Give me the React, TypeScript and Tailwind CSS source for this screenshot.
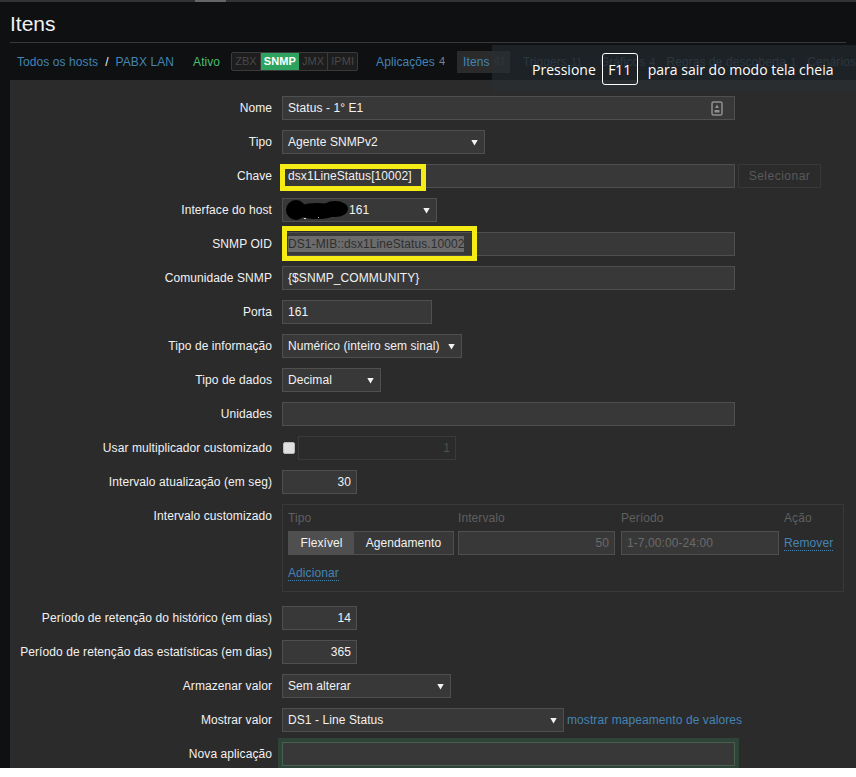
import React from "react";

const field = "h-6 border border-[#4f4f4f] bg-[#383838] text-[#f2f2f2] text-xs px-[5px] flex items-center";

function Row({ label, children }: { label: string; children: React.ReactNode }) {
  return (
    <div className="flex items-start gap-[10px]">
      <div className="w-[262px] shrink-0 h-6 flex items-center justify-end text-xs text-[#f2f2f2] whitespace-nowrap">{label}</div>
      <div className="flex items-start min-w-0">{children}</div>
    </div>
  );
}

function Select({ w, text, hidden }: { w: string; text: string; hidden?: boolean }) {
  return (
    <div className={`${field} ${w} justify-between`}>
      <span className={hidden ? "pl-[61px]" : ""}>{text}</span>
      <svg width="7" height="7" viewBox="0 0 7 7" className="mr-px"><path d="M0.3 1h6.4L3.5 6.5z" fill="#f2f2f2" /></svg>
    </div>
  );
}

function Link({ children, dotted, dim }: { children: React.ReactNode; dotted?: boolean; dim?: boolean }) {
  return <span className={`${dim ? "text-[#2f4556]" : "text-[#4484b4]"} text-xs ${dotted ? "border-b border-dotted border-[#4484b4]" : ""}`}>{children}</span>;
}

function Count({ n, dim }: { n: string; dim?: boolean }) {
  return <span className={`${dim ? "text-[#2f3f4a]" : "text-[#7d8488]"} text-[11px] ml-1`}>{n}</span>;
}

function Proto({ t, on, last }: { t: string; on?: boolean; last?: boolean }) {
  return (
    <span className={`h-[17px] px-[3px] flex items-center text-[11px] ${on ? "bg-[#2ea35f] text-white font-bold" : "text-[#4a4a4a]"} ${last || on ? "" : "border-r border-[#3a3a3a]"}`}>{t}</span>
  );
}

export default function App() {
  return (
    <div className="relative w-[856px] h-[768px] overflow-hidden bg-[#0e1012] font-['Liberation_Sans',Arial,sans-serif] tracking-[0.08px]">
      <div className="h-[2px] bg-[#333] flex"><div className="ml-[195px] w-[31px] bg-[#666]" /></div>
      <div className="h-[40px] px-[10px] pt-[2px] flex items-center">
        <h1 className="text-[21px] text-[#f2f2f2] leading-none tracking-normal">Itens</h1>
      </div>
      <div className="mx-[10px] h-px bg-[#383838]" />
      <nav className="h-[37px] flex items-center text-xs whitespace-nowrap">
        <div className="ml-[17px]"><Link>Todos os hosts</Link></div>
        <span className="ml-[7px] mr-[7px] text-[#f2f2f2]">/</span>
        <Link>PABX LAN</Link>
        <span className="ml-[19px] text-[#4dbd6e]">Ativo</span>
        <div className="ml-[11px] flex border border-[#3a3a3a] rounded-[2px] bg-[#1d1d1d]">
          <Proto t="ZBX" /><Proto t="SNMP" on /><Proto t="JMX" /><Proto t="IPMI" last />
        </div>
        <div className="ml-[18px]"><Link>Aplicações</Link></div><Count n="4" />
        <div className="ml-[12px] h-[22px] w-[55px] pl-[6px] bg-[#2b2b2b] flex items-center"><Link>Itens</Link><Count n="41" dim /></div>
        <div className="ml-[13px] w-[81px]"><Link dim>Triggers</Link><Count n="11" dim /></div>
        <div className="w-[70px]"><Link dim>Gráficos</Link><Count n="4" dim /></div>
        <div className="w-[148px]"><Link dim>Regras de descoberta</Link><Count n="1" dim /></div>
        <Link dim>Cenários</Link>
      </nav>

      <main className="ml-[10px] h-[688px] bg-[#2b2b2b] pt-4 flex flex-col gap-[10px]">
        <Row label="Nome">
          <div className={`${field} w-[453px] justify-between`}>
            <span>Status - 1° E1</span>
            <svg width="12" height="15" viewBox="0 0 12 15" className="mr-[6px]">
              <rect x="1" y="1" width="10" height="13" rx="1.5" fill="none" stroke="#8f8f8f" strokeWidth="1.5" />
              <path d="M6 3.5l2 3.5H4zM3.5 9h5v2.5h-5z" fill="#8f8f8f" />
            </svg>
          </div>
        </Row>
        <Row label="Tipo"><Select w="w-[203px]" text="Agente SNMPv2" /></Row>
        <Row label="Chave">
          <div className={`${field} w-[453px]`}>dsx1LineStatus[10002]</div>
          <div className="ml-[3px] h-6 w-[83px] border border-[#383838] text-xs text-[#5a5a5a] flex items-center justify-center tracking-[0.5px]">Selecionar</div>
        </Row>
        <Row label="Interface do host"><Select w="w-[155px]" text="161" hidden /></Row>
        <Row label="SNMP OID">
          <div className={`${field} w-[453px]`}>
            <span className="bg-[#6b6b6b] text-[#2e2e2e]">DS1-MIB::dsx1LineStatus.10002</span>
          </div>
        </Row>
        <Row label="Comunidade SNMP"><div className={`${field} w-[453px]`}>{"{$SNMP_COMMUNITY}"}</div></Row>
        <Row label="Porta"><div className={`${field} w-[150px]`}>161</div></Row>
        <Row label="Tipo de informação"><Select w="w-[180px]" text="Numérico (inteiro sem sinal)" /></Row>
        <Row label="Tipo de dados"><Select w="w-[99px]" text="Decimal" /></Row>
        <Row label="Unidades"><div className={`${field} w-[453px]`} /></Row>
        <Row label="Usar multiplicador customizado">
          <div className="flex items-center h-6">
            <div className="ml-px w-3 h-3 rounded-[2px] bg-[#e0e0e0] border border-[#bbb]" />
            <div className="ml-[3px] h-6 w-[158px] border border-[#3a3a3a] text-xs text-[#4f4f4f] flex items-center justify-end px-[5px]">1</div>
          </div>
        </Row>
        <Row label="Intervalo atualização (em seg)">
          <div className={`${field} w-[75px] justify-end font-normal`}>30</div>
        </Row>
        <Row label="Intervalo customizado">
          <div className="w-[562px] h-[88px] border border-[#383838] px-[5px] text-xs">
            <div className="flex h-[26px] items-center text-[#5f5f5f]">
              <span className="w-[170px]">Tipo</span>
              <span className="w-[163px]">Intervalo</span>
              <span className="w-[163px]">Período</span>
              <span>Ação</span>
            </div>
            <div className="flex items-center">
              <div className="w-[166px] h-6 flex border border-[#4f4f4f] text-[#f2f2f2]">
                <span className="w-[65px] bg-[#4f4f4f] flex items-center justify-center">Flexível</span>
                <span className="flex-1 bg-[#383838] flex items-center justify-center">Agendamento</span>
              </div>
              <div className="ml-[4px] w-[157px] h-6 border border-[#4f4f4f] bg-[#383838] text-[#6a6a6a] flex items-center justify-end px-[5px]">50</div>
              <div className="ml-[6px] w-[158px] h-6 border border-[#4f4f4f] bg-[#383838] text-[#6a6a6a] flex items-center px-[5px]">1-7,00:00-24:00</div>
              <div className="ml-[5px]"><Link dotted>Remover</Link></div>
            </div>
            <div className="mt-[10px]"><Link dotted>Adicionar</Link></div>
          </div>
        </Row>
        <div className="h-1 -mt-[10px]" />
        <Row label="Período de retenção do histórico (em dias)"><div className={`${field} w-[75px] justify-end`}>14</div></Row>
        <Row label="Período de retenção das estatísticas (em dias)"><div className={`${field} w-[75px] justify-end`}>365</div></Row>
        <Row label="Armazenar valor"><Select w="w-[169px]" text="Sem alterar" /></Row>
        <Row label="Mostrar valor">
          <Select w="w-[282px]" text="DS1 - Line Status" />
          <span className="ml-[3px] h-6 flex items-center"><Link>mostrar mapeamento de valores</Link></span>
        </Row>
        <Row label="Nova aplicação">
          <div className="-m-[4px] p-[4px] bg-[#2e4438]">
            <div className="h-6 w-[453px] border border-[#48604f] bg-[#383838]" />
          </div>
        </Row>
      </main>

      {/* fullscreen notice over the page */}
      <div className="absolute left-[492px] right-0 top-[45px] h-[48px] bg-[#282e34]/60 flex items-center pl-[40px] text-[14px] text-white font-['Open_Sans',sans-serif] tracking-normal whitespace-nowrap">
        <span>Pressione</span>
        <span className="ml-[6px] mr-[10px] w-[36px] h-[32px] border border-white rounded-[3px] flex items-center justify-center">F11</span>
        <span>para sair do modo tela cheia</span>
      </div>

      {/* annotations drawn on the screenshot */}
      <div className="absolute left-[280px] top-[164px] w-[146px] h-[27px] border-[5px] border-[#f5ec16]" />
      <div className="absolute left-[282px] top-[226px] w-[195px] h-[35px] border-[5px] border-[#f5ec16]" />
      <svg className="absolute left-[285px] top-[198px]" width="66" height="24" viewBox="0 0 66 24">
        <ellipse cx="11" cy="12" rx="10" ry="10" fill="#000" />
        <ellipse cx="32" cy="13" rx="22" ry="8" fill="#000" />
        <ellipse cx="50" cy="11" rx="13" ry="8" fill="#000" />
        <rect x="19" y="20" width="2" height="1" fill="#ddd" />
        <rect x="33" y="19" width="1" height="1" fill="#aaa" />
      </svg>
    </div>
  );
}
